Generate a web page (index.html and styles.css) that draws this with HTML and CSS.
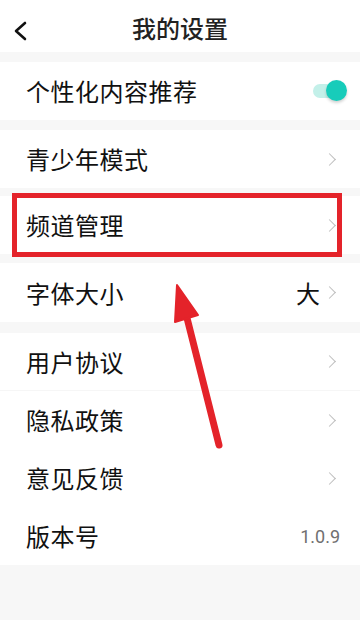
FILE: index.html
```html
<!DOCTYPE html>
<html lang="zh-CN">
<head>
<meta charset="utf-8">
<title>我的设置</title>
<link rel="stylesheet" href="styles.css">
</head>
<body>
<div class="page">
  <header class="topbar">
    <svg class="back" width="16" height="20" viewBox="0 0 16 20"><path d="M13 2 L4 10 L13 18" fill="none" stroke="#111" stroke-width="2.6" stroke-linecap="round" stroke-linejoin="round"/></svg>
    <h1 class="title">我的设置</h1>
  </header>
  <div class="gap g10"></div>
  <div class="row h58">
    <span class="label">个性化内容推荐</span>
    <span class="toggle"><span class="track"></span><span class="knob"></span></span>
  </div>
  <div class="gap g10"></div>
  <div class="row h58">
    <span class="label">青少年模式</span>
    <span class="chev"></span>
  </div>
  <div class="gap g8"></div>
  <div class="row h58">
    <span class="label">频道管理</span>
    <span class="chev"></span>
  </div>
  <div class="gap g9"></div>
  <div class="row h59">
    <span class="label">字体大小</span>
    <span class="right"><span class="value">大</span><span class="chev"></span></span>
  </div>
  <div class="gap g11"></div>
  <div class="row h58 divided">
    <span class="label">用户协议</span>
    <span class="chev"></span>
  </div>
  <div class="row h58">
    <span class="label">隐私政策</span>
    <span class="chev"></span>
  </div>
  <div class="row h58">
    <span class="label">意见反馈</span>
    <span class="chev"></span>
  </div>
  <div class="row h58">
    <span class="label">版本号</span>
    <span class="version">1.0.9</span>
  </div>

  <div class="highlight"></div>
  <svg class="arrow" width="360" height="620" viewBox="0 0 360 620">
    <line x1="219" y1="445" x2="186" y2="314" stroke="#e4232a" stroke-width="7" stroke-linecap="round"/>
    <polygon points="177,285 175,322 198,315" fill="#e4232a" stroke="#e4232a" stroke-width="2" stroke-linejoin="round"/>
  </svg>
</div>
</body>
</html>
```
FILE: styles.css
```css
html, body {
  margin: 0;
  padding: 0;
}
body {
  background: #f7f7f7;
  font-family: "Noto Sans CJK SC", "Noto Sans", sans-serif;
  color: #111;
}
.page {
  position: relative;
  width: 360px;
  height: 620px;
  overflow: hidden;
  background: #f7f7f7;
}
.topbar {
  height: 52px;
  background: #fff;
  display: flex;
  align-items: center;
  justify-content: center;
  position: relative;
}
.back {
  position: absolute;
  left: 12px;
  top: 21px;
}
.title {
  margin: 0;
  font-size: 24px;
  font-weight: 500;
  color: #222;
  line-height: 1;
  padding-top: 4px;
}
.gap { background: #f7f7f7; }
.g8 { height: 8px; }
.g9 { height: 9px; }
.g10 { height: 10px; }
.g11 { height: 11px; }
.row {
  background: #fff;
  display: flex;
  align-items: center;
  justify-content: space-between;
  padding: 0 20px 0 26px;
  box-sizing: border-box;
}
.h58 { height: 58px; }
.h59 { height: 59px; }
.divided { border-bottom: 1px solid #f6f6f6; }
.label {
  font-size: 24px;
  line-height: 1;
  letter-spacing: 0.5px;
}
.right {
  display: flex;
  align-items: center;
}
.value {
  font-size: 24px;
  line-height: 1;
  margin-right: 5px;
}
.chev {
  width: 8px;
  height: 8px;
  border-top: 1.5px solid #bdbdbd;
  border-right: 1.5px solid #bdbdbd;
  transform: rotate(45deg);
  margin-right: 6px;
}
.version {
  font-family: "Roboto", "Noto Sans", sans-serif;
  font-size: 18px;
  color: #707070;
}
.toggle {
  position: relative;
  width: 34px;
  height: 22px;
  margin-right: -7px;
}
.track {
  position: absolute;
  left: 0;
  top: 4px;
  width: 28px;
  height: 14px;
  border-radius: 7px;
  background: #c3f0e9;
}
.knob {
  position: absolute;
  right: 0;
  top: 0;
  width: 21px;
  height: 21px;
  border-radius: 50%;
  background: #17ccba;
  box-shadow: 0 2px 3px rgba(0,0,0,0.18);
}
.highlight {
  position: absolute;
  left: 12px;
  top: 193px;
  width: 330px;
  height: 64px;
  box-sizing: border-box;
  border: 5px solid #e4232a;
}
.arrow {
  position: absolute;
  left: 0;
  top: 0;
  pointer-events: none;
}
```
